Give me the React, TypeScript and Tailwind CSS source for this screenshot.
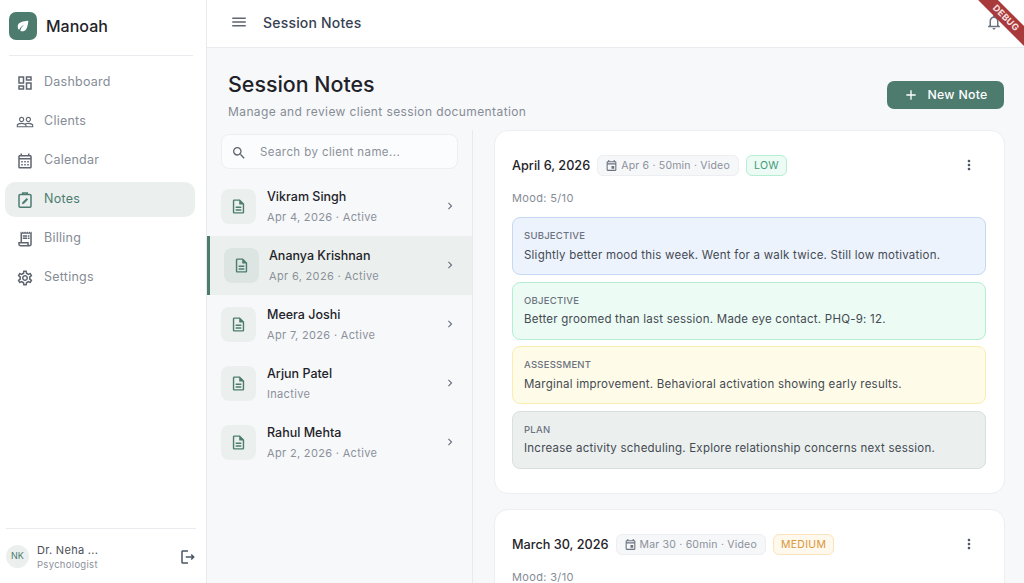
import React from "react";
import {
  MdOutlineDashboard, MdOutlineCalendarMonth, MdOutlineReceiptLong, MdOutlineSettings,
  MdOutlineDescription, MdOutlineLogout, MdOutlineNotifications, MdMoreVert, MdChevronRight, MdMenu, MdAdd, MdSearch, MdOutlineEvent, MdEco, MdPeopleOutline,
} from "react-icons/md";

function NotesIcon({ className }: { className?: string }) {
  return (
    <svg viewBox="0 0 24 24" className={className} fill="none" stroke="currentColor" strokeWidth="2">
      <rect x="4" y="4.5" width="16" height="17" rx="1.5" />
      <path d="M9 4.5V2.5h6v2" />
      <path d="M8 17.5l.6-2.6 5.6-5.6 2 2-5.6 5.6z" fill="currentColor" stroke="none" />
    </svg>
  );
}

const nav = [
  { label: "Dashboard", Icon: MdOutlineDashboard },
  { label: "Clients", Icon: MdPeopleOutline },
  { label: "Calendar", Icon: MdOutlineCalendarMonth },
  { label: "Notes", Icon: NotesIcon, active: true },
  { label: "Billing", Icon: MdOutlineReceiptLong },
  { label: "Settings", Icon: MdOutlineSettings },
];

const clients = [
  { name: "Vikram Singh", sub: "Apr 4, 2026 · Active" },
  { name: "Ananya Krishnan", sub: "Apr 6, 2026 · Active", active: true },
  { name: "Meera Joshi", sub: "Apr 7, 2026 · Active" },
  { name: "Arjun Patel", sub: "Inactive" },
  { name: "Rahul Mehta", sub: "Apr 2, 2026 · Active" },
];

const soap = [
  { label: "SUBJECTIVE", text: "Slightly better mood this week. Went for a walk twice. Still low motivation.", cls: "bg-[#edf3fd] border-[#c5d9f3]" },
  { label: "OBJECTIVE", text: "Better groomed than last session. Made eye contact. PHQ-9: 12.", cls: "bg-[#ecfbf4] border-[#b5eed3]" },
  { label: "ASSESSMENT", text: "Marginal improvement. Behavioral activation showing early results.", cls: "bg-[#fefbe9] border-[#f9eeb0]" },
  { label: "PLAN", text: "Increase activity scheduling. Explore relationship concerns next session.", cls: "bg-[#ebefee] border-[#d8dfdd]" },
];

function Meta({ text }: { text: string }) {
  return (
    <span className="flex h-[21px] items-center gap-[3px] whitespace-nowrap rounded-[6px] border border-[#eceef1] bg-[#f6f7f9] pl-[7px] pr-[8px] text-[10.5px] tracking-[0.2px] text-[#8b919a]">
      <MdOutlineEvent className="h-[13px] w-[13px] text-[#6b7280]" />
      {text}
    </span>
  );
}

function CardHeader({ date, meta, tag, tagCls }: { date: string; meta: string; tag: string; tagCls: string }) {
  return (
    <div className="flex h-[21px] items-center gap-[7px]">
      <span className="whitespace-nowrap text-[12.7px] font-medium text-[#1f2329]">{date}</span>
      <Meta text={meta} />
      <span className={`flex h-[21px] items-center rounded-[6px] border px-[7px] text-[10.5px] tracking-[0.3px] ${tagCls}`}>{tag}</span>
      <MdMoreVert className="-mt-[1px] ml-auto mr-[10px] h-[16px] w-[16px] text-[#4b5563]" />
    </div>
  );
}

export default function App() {
  return (
    <div className="relative flex h-[583px] w-[1024px] overflow-hidden bg-[#f7f8fa] font-['Inter',sans-serif]">
      <aside className="flex w-[207px] shrink-0 flex-col border-r border-[#e8eaed] bg-white">
        <div className="ml-[9px] mr-[13px] flex h-[56px] items-center gap-[9px] border-b border-[#e8eaed] pb-[4px]">
          <div className="flex h-[28px] w-[28px] items-center justify-center rounded-[7px] bg-[#4d7c6f]">
            <MdEco className="h-[16px] w-[16px] text-white" />
          </div>
          <span className="text-[16px] font-medium text-[#1f2329]">Manoah</span>
        </div>
        <nav className="mt-[9px] flex flex-col gap-[4px] pl-[5px] pr-[11px]">
          {nav.map(({ label, Icon, active }) => (
            <div key={label} className={`flex h-[35px] items-center gap-[10px] rounded-[10px] pl-[11px] text-[12.5px] tracking-[0.25px] ${active ? "bg-[#ebf0ee] text-[#4d7c6f]" : "text-[#868c96]"}`}>
              <Icon className={`h-[18px] w-[18px] ${active ? "text-[#4d7c6f]" : "text-[#5f6670]"}`} />
              {label}
            </div>
          ))}
        </nav>
        <div className="ml-[6px] mr-[10px] mt-auto flex h-[55px] items-center border-t border-[#e8eaed]">
          <div className="flex h-[23px] w-[23px] items-center justify-center rounded-full bg-[#ebf0ee] text-[9px] text-[#4d7c6f]">NK</div>
          <div className="ml-[8px] flex flex-col pt-[3px]">
            <span className="text-[11px] leading-[15px] tracking-[0.3px] text-[#4a4f57]">Dr. Neha ...</span>
            <span className="text-[9.5px] leading-[14px] tracking-[0.3px] text-[#8b919a]">Psychologist</span>
          </div>
          <MdOutlineLogout className="ml-auto mr-[-1px] mt-[1px] h-[18px] w-[18px] text-[#4b5563]" />
        </div>
      </aside>

      <div className="flex min-w-0 flex-1 flex-col">
        <header className="flex h-[48px] shrink-0 items-center border-b border-[#e8eaed] bg-white pb-[3px] pl-[23px] pr-[21px]">
          <MdMenu className="h-[18px] w-[18px] text-[#5f6670]" />
          <span className="ml-[15px] text-[14px] font-medium tracking-[0.2px] text-[#374151]">Session Notes</span>
          <MdOutlineNotifications className="ml-auto h-[18px] w-[18px] text-[#6b7280]" />
        </header>

        <div className="flex h-[82px] shrink-0 items-start justify-between pl-[21px] pr-[20px] pt-[21px]">
          <div>
            <h1 className="text-[21.4px] font-medium leading-[30px] text-[#1f2329]">Session Notes</h1>
            <p className="mt-[4px] text-[12px] leading-[18px] tracking-[0.4px] text-[#868c96]">Manage and review client session documentation</p>
          </div>
          <button className="mt-[12px] flex h-[28px] w-[117px] items-center justify-center gap-[8px] rounded-[7px] bg-[#4d7c6f] text-[12.3px] font-medium tracking-[0.3px] text-white">
            <MdAdd className="h-[16px] w-[16px]" /> New Note
          </button>
        </div>

        <div className="flex min-h-0 flex-1">
          <div className="w-[266px] shrink-0 border-r border-[#e8eaed] pt-[4px]">
            <div className="mx-[14px] flex h-[35px] items-center rounded-[8px] border border-[#eceef1] bg-[#fbfcfd] pl-[9px] pt-[2px]">
              <MdSearch className="h-[16px] w-[16px] text-[#5f6670]" />
              <span className="ml-[13px] text-[11.5px] tracking-[0.4px] text-[#8b919a]">Search by client name...</span>
            </div>
            <div className="mt-[8px]">
              {clients.map((c) => (
                <div key={c.name} className={`flex h-[59px] items-center pl-[14px] pr-[15px] ${c.active ? "border-l-[3px] border-[#4d7c6f] bg-[#ebf0ee]" : ""}`}>
                  <div className={`flex h-[35px] w-[35px] items-center justify-center rounded-[8px] ${c.active ? "bg-[#dce5e2]" : "bg-[#ebf0ee]"}`}>
                    <MdOutlineDescription className="h-[17px] w-[17px] text-[#4d7c6f]" />
                  </div>
                  <div className={`flex flex-col gap-[5px] ${c.active ? "ml-[10px]" : "ml-[11px]"}`}>
                    <span className="text-[12.5px] font-medium leading-[16px] text-[#1f2329]">{c.name}</span>
                    <span className="text-[11px] leading-[15px] tracking-[0.33px] text-[#8b919a]">{c.sub}</span>
                  </div>
                  <MdChevronRight className="-mt-[2px] ml-auto h-[14px] w-[14px] text-[#6b7280]" />
                </div>
              ))}
            </div>
          </div>

          <div className="flex min-w-0 flex-1 flex-col gap-[15px] overflow-hidden pl-[21px] pr-[19px]">
            <div className="h-[364px] shrink-0 rounded-[14px] border border-[#eceef1] bg-white pl-[17px] pr-[17px] pt-[24px]">
              <CardHeader date="April 6, 2026" meta="Apr 6 · 50min · Video" tag="LOW" tagCls="bg-[#ecfbf4] border-[#b5eed3] text-[#3f9a78]" />
              <div className="mt-[14px] text-[11px] leading-[16px] tracking-[0.35px] text-[#868c96]">Mood: 5/10</div>
              <div className="mr-[1px] mt-[11px] flex flex-col gap-[6.5px]">
                {soap.map((s) => (
                  <div key={s.label} className={`h-[58px] rounded-[8px] border px-[11px] pt-[11px] ${s.cls}`}>
                    <div className="text-[9.5px] font-medium leading-[14px] tracking-[0.25px] text-[#6b7280]">{s.label}</div>
                    <div className="mt-[3.5px] text-[11.5px] leading-[16px] tracking-[0.23px] text-[#444a52]">{s.text}</div>
                  </div>
                ))}
              </div>
            </div>
            <div className="h-[200px] shrink-0 rounded-[14px] border border-[#eceef1] bg-white px-[17px] pt-[24px]">
              <CardHeader date="March 30, 2026" meta="Mar 30 · 60min · Video" tag="MEDIUM" tagCls="bg-[#fff8ec] border-[#fbe3bd] text-[#d9963a]" />
              <div className="mt-[14px] text-[11px] leading-[16px] tracking-[0.35px] text-[#868c96]">Mood: 3/10</div>
            </div>
          </div>
        </div>
      </div>

      <div className="pointer-events-none absolute right-[-27px] top-[11px] flex h-[14px] w-[90px] rotate-45 items-center justify-center bg-[#a83a3c] text-[9px] font-bold tracking-[0.3px] text-[#fbe3e3]">DEBUG</div>
    </div>
  );
}
